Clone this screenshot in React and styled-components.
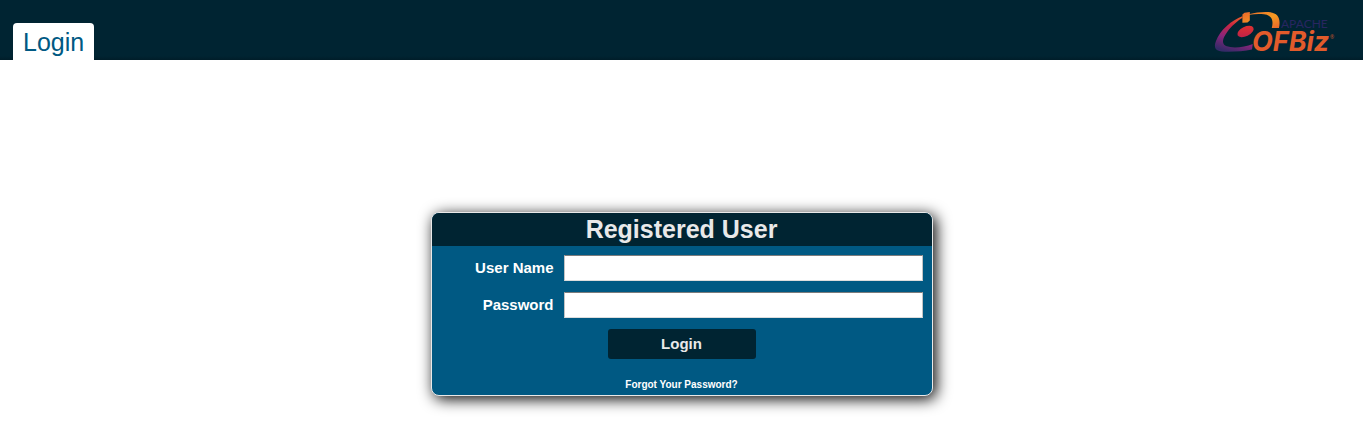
import React from "react";
import styled, { createGlobalStyle } from "styled-components";

const GlobalStyle = createGlobalStyle`
  * { box-sizing: border-box; }
  body {
    margin: 0;
    background: #fff;
    font-family: "Liberation Sans", Arial, Helvetica, sans-serif;
  }
`;

const Masthead = styled.header`
  display: flex;
  justify-content: space-between;
  align-items: flex-end;
  height: 60px;
  padding: 0 28px 0 13px;
  background: linear-gradient(#002432 56px, #001d29 60px);
`;

const Tab = styled.a`
  padding: 5px 10px 3px;
  border-radius: 4px 4px 0 0;
  background: #fff;
  color: #005983;
  font-size: 25px;
  line-height: 29px;
  text-decoration: none;
`;

const Logo = styled.svg`
  display: block;
  width: 121px;
  height: 50px;
  overflow: visible;
`;

const Main = styled.main`
  display: flex;
  justify-content: center;
  padding: 152px 16px 36px;
`;

const Card = styled.section`
  width: 502px;
  max-width: 100%;
  border: 1px solid #e9e9e9;
  border-radius: 8px;
  background: #005983;
  box-shadow: 3px 3px 15px #000;
  overflow: hidden;
`;

const CardTitle = styled.h1`
  margin: 0;
  background: #002432;
  color: #e9e9e9;
  font-size: 25px;
  line-height: 33px;
  text-align: center;
`;

const Form = styled.form`
  display: flex;
  flex-direction: column;
  align-items: center;
  padding: 9px 9px 5px;
`;

const Fields = styled.div`
  display: grid;
  grid-template-columns: 113px 1fr;
  gap: 11px 10px;
  width: 100%;
  align-items: center;
`;

const Label = styled.label`
  color: #fff;
  font-size: 15px;
  font-weight: bold;
  line-height: 18px;
  text-align: right;
`;

const TextField = styled.input`
  width: 100%;
  height: 26px;
  padding: 4px;
  border: 1px solid;
  border-color: #7c7c7c #c3c3c3 #ddd #c3c3c3;
  background: #fff;
  font: inherit;
  font-size: 15px;
`;

const SubmitButton = styled.button`
  width: 148px;
  height: 30px;
  margin: 11px 0 20px;
  padding: 0 0 2px;
  border: 0;
  border-radius: 3px;
  background: #002432;
  color: #e9e9e9;
  font: inherit;
  font-size: 15px;
  font-weight: bold;
  cursor: pointer;
`;

const ForgotLink = styled.a`
  color: #fff;
  font-size: 10px;
  font-weight: bold;
  line-height: 11px;
  text-decoration: none;
`;

function OFBizLogo() {
  return (
    <Logo viewBox="0 0 121 50" role="img" aria-label="Apache OFBiz">
      <defs>
        <linearGradient id="swoosh" x1="0.7" y1="0" x2="0.35" y2="1">
          <stop offset="0" stopColor="#e9642a" />
          <stop offset="0.3" stopColor="#cc2740" />
          <stop offset="0.65" stopColor="#88257a" />
          <stop offset="1" stopColor="#352a68" />
        </linearGradient>
        <linearGradient id="arc" x1="0" y1="0" x2="1" y2="1">
          <stop offset="0" stopColor="#e9662b" />
          <stop offset="0.55" stopColor="#f59a22" />
          <stop offset="1" stopColor="#ea652b" />
        </linearGradient>
        <linearGradient id="core" x1="0" y1="1" x2="1" y2="0">
          <stop offset="0" stopColor="#b91f4d" />
          <stop offset="1" stopColor="#e5342c" />
        </linearGradient>
      </defs>
      <path
        d="M28.300 6.200C18 10 6 20 2 31C-1 38.500 2 41.700 11 41.700C20 42 30 41.200 38 39.500L38.800 34C30 37.300 19 38.600 12 36C6 33 10 26 15 19.500C19 14.700 24 10.500 28.500 7.700Z"
        fill="url(#swoosh)"
      />
      <path
        d="M28.400 4.500L30.500 2.800L35.800 2V3.900C41 2.400 49 1.600 54.500 2C64 2.600 67 8 65 18H57.800C60 9.500 57 5 50 4.300C45 3.900 40 4.100 35.800 4.700V10.500L33.500 12.500L28.400 12.700Z"
        fill="url(#arc)"
      />
      <ellipse cx="31.500" cy="21.500" rx="8.800" ry="4.700" transform="rotate(-26 31.500 21.500)" fill="url(#core)" />
      <text x="67" y="18" fontFamily="Lato, sans-serif" fontSize="12" fill="#282661">APACHE</text>
      <text x="38" y="41" fontFamily="Inter, sans-serif" fontSize="27" fontWeight="700" fontStyle="italic" fill="#e25b2b">OFBiz</text>
      <text x="116" y="29" fontFamily="'Open Sans', sans-serif" fontSize="5" fill="#c9552d">®</text>
    </Logo>
  );
}

export default function App() {
  return (
    <>
      <GlobalStyle />
      <Masthead>
        <Tab href="#login">Login</Tab>
        <OFBizLogo />
      </Masthead>
      <Main>
        <Card id="login">
          <CardTitle>Registered User</CardTitle>
          <Form onSubmit={(event) => event.preventDefault()}>
            <Fields>
              <Label htmlFor="username">User Name</Label>
              <TextField id="username" type="text" autoComplete="username" />
              <Label htmlFor="password">Password</Label>
              <TextField id="password" type="password" autoComplete="current-password" />
            </Fields>
            <SubmitButton type="submit">Login</SubmitButton>
            <ForgotLink href="#forgot">Forgot Your Password?</ForgotLink>
          </Form>
        </Card>
      </Main>
    </>
  );
}
